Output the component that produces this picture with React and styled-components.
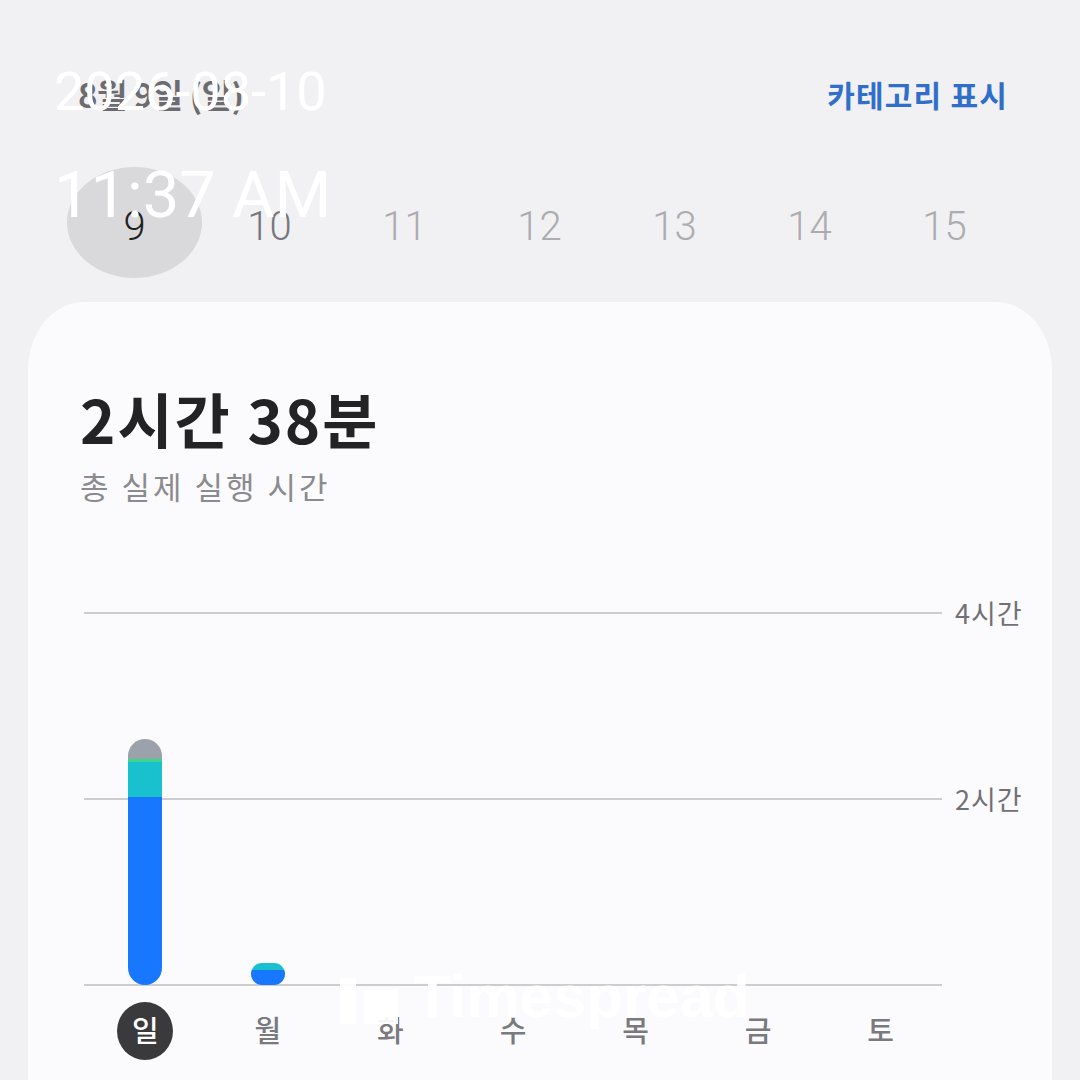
import React from "react";
import styled, { createGlobalStyle } from "styled-components";

const GlobalStyle = createGlobalStyle`
  html, body { margin: 0; padding: 0; }
  body {
    width: 1080px;
    height: 1080px;
    overflow: hidden;
    background: #f1f1f3;
    font-family: "Noto Sans CJK KR", "Noto Sans", sans-serif;
  }
`;

const Page = styled.div`
  position: relative;
  width: 1080px;
  height: 1080px;
  overflow: hidden;
  background: #f1f1f3;
`;

const Header = styled.header`
  display: flex;
  justify-content: space-between;
  align-items: center;
  padding: 74px 72px 0 78px;
  height: 40px;
`;

const DateTitle = styled.div`
  font-size: 33px;
  font-weight: 700;
  color: #6c6c70;
  line-height: 40px;
  letter-spacing: -0.5px;
`;

const CategoryLink = styled.button`
  border: 0;
  background: none;
  padding: 0;
  font-family: inherit;
  font-size: 30px;
  font-weight: 700;
  color: #2f6fca;
  line-height: 40px;
  letter-spacing: 1.2px;
`;

const DayStrip = styled.div`
  display: grid;
  grid-template-columns: repeat(7, 135px);
  padding: 53px 0 0 67px;
  height: 111px;
`;

const DayNumber = styled.div`
  display: flex;
  align-items: center;
  justify-content: center;
  padding-top: 8px;
  box-sizing: border-box;
  border-radius: 50%;
  font-family: Roboto, "Liberation Sans", sans-serif;
  font-weight: 300;
  font-size: 40px;
  color: ${(p) => (p.$selected ? "#1f1f21" : p.$near ? "#77777b" : "#acacb0")};
  background: ${(p) => (p.$selected ? "#d9d9dc" : "transparent")};
`;

const Card = styled.section`
  margin: 24px 28px 0;
  background: #fbfbfd;
  border-radius: 56px 56px 0 0 / 68px 68px 0 0;
  padding: 82px 0 0 52px;
  height: 800px;
  box-sizing: border-box;
`;

const Total = styled.div`
  font-size: 60px;
  font-weight: 700;
  color: #232325;
  line-height: 68px;
  letter-spacing: 2px;
`;

const TotalCaption = styled.div`
  margin-top: 14px;
  font-size: 31px;
  font-weight: 400;
  color: #8b8b8f;
  line-height: 40px;
  letter-spacing: 3px;
`;

const Chart = styled.div`
  margin-top: 106px;
  margin-left: 4px;
  width: 950px;
`;

const Plot = styled.div`
  display: grid;
  height: 374px;
  & > * {
    grid-area: 1 / 1;
  }
`;

const Grid = styled.div`
  display: flex;
  flex-direction: column;
  justify-content: space-between;
`;

const GridRow = styled.div`
  display: flex;
  align-items: center;
  height: 2px;
`;

const GridLine = styled.div`
  width: 858px;
  height: 2px;
  background: #cdcdd1;
`;

const AxisLabel = styled.span`
  margin-left: 13px;
  font-size: 27px;
  line-height: 2px;
  color: #717175;
  letter-spacing: 1px;
`;

const Bars = styled.div`
  display: grid;
  grid-template-columns: repeat(7, 1fr);
  width: 858px;
  align-items: end;
  justify-items: center;
  padding-bottom: 1px;
`;

const Bar = styled.div`
  width: 34px;
  border-radius: 17px;
  overflow: hidden;
  display: flex;
  flex-direction: column;
`;

const Segment = styled.div`
  background: ${(p) => p.$color};
  flex: none;
`;

const DayLabels = styled.div`
  display: grid;
  grid-template-columns: repeat(7, 1fr);
  width: 858px;
  justify-items: center;
  margin-top: 16px;
`;

const DayLabel = styled.div`
  width: 56px;
  height: 58px;
  border-radius: 50%;
  display: flex;
  align-items: center;
  justify-content: center;
  padding-bottom: 4px;
  box-sizing: border-box;
  font-size: 29px;
  font-weight: 500;
  color: ${(p) => (p.$active ? "#ffffff" : "#7a7a7e")};
  background: ${(p) => (p.$active ? "#3a3a3d" : "transparent")};
`;

const ClockOverlay = styled.div`
  position: absolute;
  left: 54px;
  top: 60px;
  color: #ffffff;
  font-family: Roboto, "Liberation Sans", sans-serif;
  pointer-events: none;
`;

const OverlayDate = styled.div`
  font-size: 54px;
  line-height: 64px;
  font-weight: 400;
`;

const OverlayTime = styled.div`
  margin-top: 36px;
  font-size: 65px;
  line-height: 70px;
  font-weight: 400;
`;

const Watermark = styled.div`
  position: absolute;
  left: 340px;
  top: 962px;
  display: flex;
  align-items: center;
  gap: 16px;
  font-family: "Liberation Sans", Arial, sans-serif;
  font-weight: 700;
  font-size: 60px;
  color: rgba(255, 255, 255, 0.92);
  pointer-events: none;
`;

const WatermarkMark = styled.span`
  display: flex;
  align-items: flex-end;
  gap: 8px;
  height: 46px;
  margin-top: 8px;
`;

const MarkPart = styled.span`
  width: ${(p) => p.$w}px;
  height: ${(p) => p.$h}px;
  background: rgba(255, 255, 255, 0.92);
`;

const days = [9, 10, 11, 12, 13, 14, 15];
const weekdays = ["일", "월", "화", "수", "목", "금", "토"];

const bars = [
  [
    ["#9ca2ab", 20],
    ["#3ad68e", 3],
    ["#19c1cf", 35],
    ["#1877ff", 188],
  ],
  [
    ["#19c1cf", 7],
    ["#1877ff", 15],
  ],
  [],
  [],
  [],
  [],
  [],
];

export default function App() {
  return (
    <Page>
      <GlobalStyle />
      <Header>
        <DateTitle>8월 9일 (일)</DateTitle>
        <CategoryLink>카테고리 표시</CategoryLink>
      </Header>
      <DayStrip>
        {days.map((d, i) => (
          <DayNumber key={d} $selected={i === 0} $near={i === 1}>
            {d}
          </DayNumber>
        ))}
      </DayStrip>
      <Card>
        <Total>2시간 38분</Total>
        <TotalCaption>총 실제 실행 시간</TotalCaption>
        <Chart>
          <Plot>
            <Grid>
              <GridRow>
                <GridLine />
                <AxisLabel>4시간</AxisLabel>
              </GridRow>
              <GridRow>
                <GridLine />
                <AxisLabel>2시간</AxisLabel>
              </GridRow>
              <GridRow>
                <GridLine />
              </GridRow>
            </Grid>
            <Bars>
              {bars.map((segs, i) => (
                <Bar key={i}>
                  {segs.map(([c, h], j) => (
                    <Segment key={j} $color={c} style={{ height: h }} />
                  ))}
                </Bar>
              ))}
            </Bars>
          </Plot>
          <DayLabels>
            {weekdays.map((w, i) => (
              <DayLabel key={w} $active={i === 0}>
                {w}
              </DayLabel>
            ))}
          </DayLabels>
        </Chart>
      </Card>
      <ClockOverlay>
        <OverlayDate>2026-08-10</OverlayDate>
        <OverlayTime>11:37 AM</OverlayTime>
      </ClockOverlay>
      <Watermark>
        <WatermarkMark>
          <MarkPart $w={16} $h={46} />
          <MarkPart $w={34} $h={34} />
        </WatermarkMark>
        <span>Timespread</span>
      </Watermark>
    </Page>
  );
}
